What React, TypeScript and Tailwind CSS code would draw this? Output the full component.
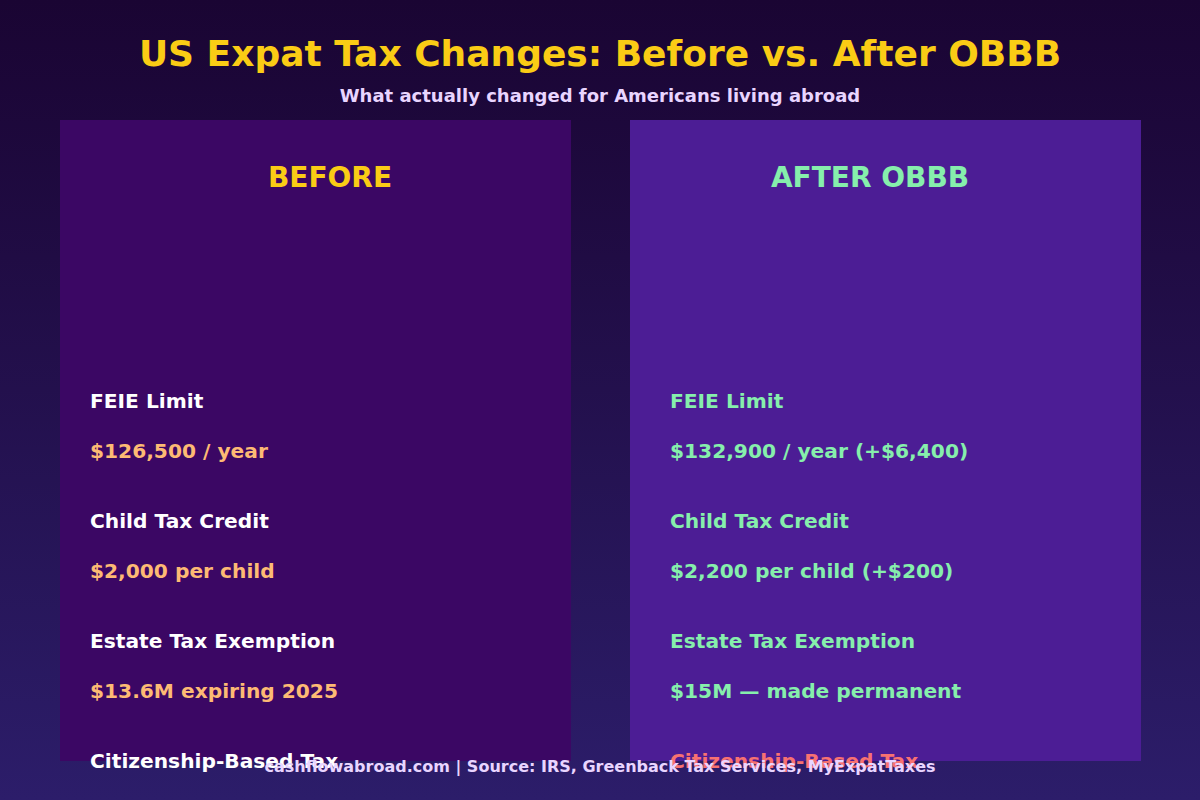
import React from "react";

interface Row {
  label: string;
  value: string;
  labelClass?: string;
}

const before: Row[] = [
  { label: "FEIE Limit", value: "$126,500 / year" },
  { label: "Child Tax Credit", value: "$2,000 per child" },
  { label: "Estate Tax Exemption", value: "$13.6M expiring 2025" },
  { label: "Citizenship-Based Tax", value: "" },
];

const after: Row[] = [
  { label: "FEIE Limit", value: "$132,900 / year (+$6,400)" },
  { label: "Child Tax Credit", value: "$2,200 per child (+$200)" },
  { label: "Estate Tax Exemption", value: "$15M — made permanent" },
  { label: "Citizenship-Based Tax", value: "", labelClass: "text-[#f87171]" },
];

const Panel = ({
  title,
  titleClass,
  titleWidth,
  bg,
  pad,
  rows,
  labelClass,
  valueClass,
}: {
  title: string;
  titleClass: string;
  titleWidth: string;
  bg: string;
  pad: string;
  rows: Row[];
  labelClass: string;
  valueClass: string;
}) => (
  <div className={`w-[511px] h-[641px] shrink-0 ${bg} pt-[44px]`}>
    <div className={`${titleWidth} text-center text-[28px] leading-[28px] font-bold ${titleClass}`}>
      {title}
    </div>
    <div className={`mt-[199px] flex flex-col ${pad}`}>
      {rows.map((r) => (
        <div key={r.label} className="flex flex-col">
          <div className={`text-[20.2px] leading-[20px] font-bold whitespace-nowrap ${r.labelClass ?? labelClass}`}>
            {r.label}
          </div>
          {r.value && (
            <div className={`mt-[30px] mb-[50px] text-[20.2px] leading-[20px] font-bold whitespace-nowrap ${valueClass}`}>
              {r.value}
            </div>
          )}
        </div>
      ))}
    </div>
  </div>
);

export default function App() {
  return (
    <div
      className="w-[1200px] h-[800px] overflow-hidden bg-gradient-to-b from-[#1a0533] to-[#2c1d6a] flex flex-col items-center"
      style={{ fontFamily: '"DejaVu Sans", sans-serif' }}
    >
      <h1 className="mt-[36px] text-[36px] leading-[36px] font-bold text-[#facc15]">
        US Expat Tax Changes: Before vs. After OBBB
      </h1>
      <p className="mt-[15px] text-[18px] leading-[18px] font-bold text-[#e9d5ff]">
        What actually changed for Americans living abroad
      </p>
      <div className="mt-[15px] w-full flex gap-[59px] pl-[60px]">
        <Panel
          title="BEFORE"
          titleClass="text-[#facc15]"
          titleWidth="w-[540px]"
          bg="bg-[#3b0764]"
          pad="pl-[30px]"
          rows={before}
          labelClass="text-white"
          valueClass="text-[#fdba74]"
        />
        <Panel
          title="AFTER OBBB"
          titleClass="text-[#86efac]"
          titleWidth="w-[480px]"
          bg="bg-[#4c1d95]"
          pad="pl-[40px]"
          rows={after}
          labelClass="text-[#86efac]"
          valueClass="text-[#86efac]"
        />
      </div>
      <p className="relative -mt-[2px] text-[16px] leading-[16px] font-bold text-[#e9d5ff]">
        cashflowabroad.com | Source: IRS, Greenback Tax Services, MyExpatTaxes
      </p>
    </div>
  );
}
